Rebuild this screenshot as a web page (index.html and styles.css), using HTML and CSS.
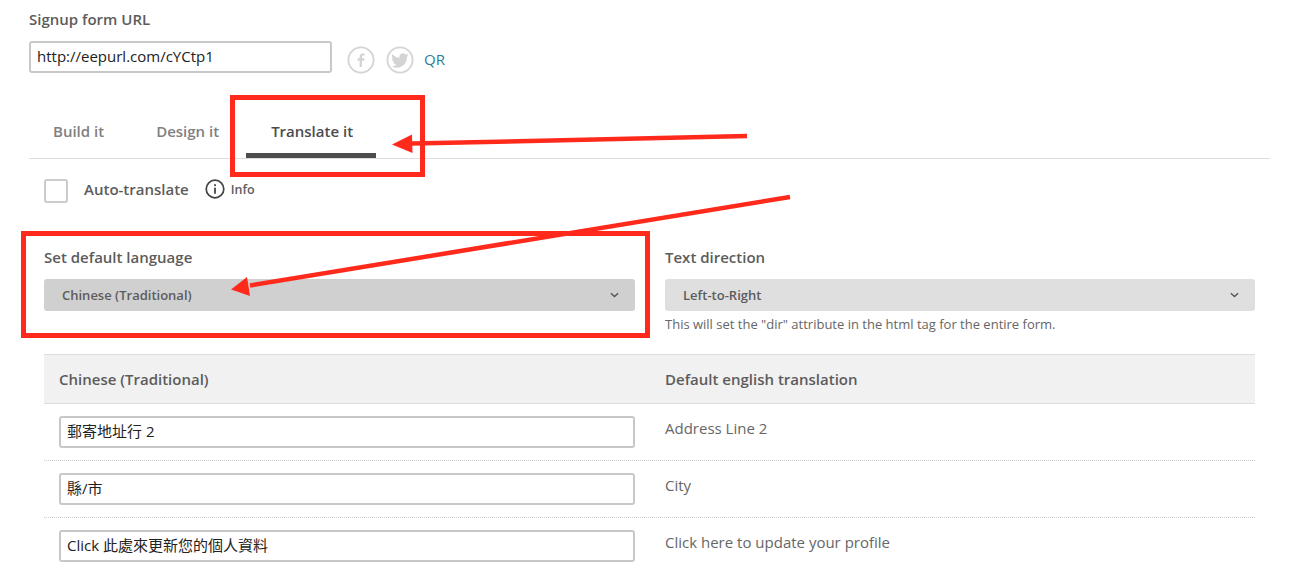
FILE: index.html
```html
<!DOCTYPE html>
<html lang="en">
<head>
<meta charset="utf-8">
<title>Signup form</title>
<link rel="stylesheet" href="styles.css">
</head>
<body>
<main class="page">
  <section class="url-block">
    <div class="label">Signup form URL</div>
    <div class="url-row">
      <div class="field url-field">http://eepurl.com/cYCtp1</div>
      <svg class="social" viewBox="0 0 28 28" width="28" height="28"><circle cx="14" cy="14" r="12.6" fill="none" stroke="#d4d4d4" stroke-width="1.8"/><path d="M15 21v-6.3h2.2l.4-2.4H15v-1.5c0-.8.3-1.2 1.2-1.2h1.4V7.5c-.4 0-1.100-.1-1.900-.1-1.900 0-3.100 1.100-3.100 3.200v1.700h-2.100v2.400h2.100V21z" fill="#d4d4d4"/></svg>
      <svg class="social" viewBox="0 0 28 28" width="28" height="28"><circle cx="14" cy="14" r="12.6" fill="none" stroke="#d4d4d4" stroke-width="1.8"/><path d="M22.500 9c-.7.300-1.300.5-2.100.6.800-.5 1.300-1.200 1.600-2-.7.400-1.500.7-2.300.9a3.600 3.600 0 0 0-6.200 3.300C10.600 11.600 8 10.200 6.300 8c-1 1.600-.5 3.700 1.100 4.800-.6 0-1.100-.2-1.600-.4 0 1.700 1.200 3.200 2.900 3.600-.5.100-1.100.2-1.600.1.500 1.400 1.800 2.400 3.400 2.500A7.200 7.200 0 0 1 5.200 20.100 10.200 10.200 0 0 0 20.900 11c.6-.5 1.200-1.200 1.600-2z" fill="#d4d4d4"/></svg>
      <a class="qr">QR</a>
    </div>
  </section>

  <nav class="tabs">
    <span class="tab tab-build">Build it</span>
    <span class="tab tab-design">Design it</span>
    <span class="tab tab-active">Translate it</span>
  </nav>

  <section class="auto-row">
    <span class="checkbox"></span>
    <span class="auto-label">Auto-translate</span>
    <svg class="info-icon" viewBox="0 0 20 20" width="20" height="20"><circle cx="10" cy="10" r="8.800" fill="none" stroke="#444" stroke-width="1.700"/><rect x="9.100" y="8.700" width="1.800" height="6" fill="#444"/><rect x="9.100" y="5.200" width="1.800" height="1.900" fill="#444"/></svg>
    <span class="info-text">Info</span>
  </section>

  <section class="settings">
    <div class="setting">
      <div class="label">Set default language</div>
      <div class="select select-focus"><span>Chinese (Traditional)</span><svg class="chev" viewBox="0 0 10 6" width="9" height="6"><path d="M1 1l4 3.600L9 1" fill="none" stroke="#555" stroke-width="1.600"/></svg></div>
    </div>
    <div class="setting">
      <div class="label">Text direction</div>
      <div class="select"><span>Left-to-Right</span><svg class="chev" viewBox="0 0 10 6" width="9" height="6"><path d="M1 1l4 3.600L9 1" fill="none" stroke="#555" stroke-width="1.600"/></svg></div>
      <p class="hint">This will set the "dir" attribute in the html tag for the entire form.</p>
    </div>
  </section>

  <section class="table">
    <div class="thead">
      <div class="th">Chinese (Traditional)</div>
      <div class="th">Default english translation</div>
    </div>
    <div class="tr">
      <div class="td"><div class="field">郵寄地址行 2</div></div>
      <div class="td-text">Address Line 2</div>
    </div>
    <div class="tr">
      <div class="td"><div class="field">縣/市</div></div>
      <div class="td-text">City</div>
    </div>
    <div class="tr">
      <div class="td"><div class="field">Click 此處來更新您的個人資料</div></div>
      <div class="td-text">Click here to update your profile</div>
    </div>
  </section>
</main>

<svg class="annotations" viewBox="0 0 1305 570" width="1305" height="570">
  <rect class="note-box" x="232.500" y="97.500" width="190" height="77"/>
  <rect class="note-box" x="23.500" y="233.500" width="624" height="102"/>
  <path class="note-line" d="M747 136L412 143.600"/>
  <path class="note-head" d="M392 144.500L412 134.500L412.500 153z"/>
  <path class="note-line" d="M790 197L250 285.500"/>
  <path class="note-head" d="M231 289.500L247 277L250 296z"/>
</svg>
</body>
</html>
```
FILE: styles.css
```css
* { box-sizing: border-box; }
html, body { margin: 0; padding: 0; background: #fff; }
body {
  width: 1305px;
  height: 570px;
  overflow: hidden;
  position: relative;
  font-family: "Open Sans", "Noto Sans CJK TC", sans-serif;
  color: #555;
}
.page {
  width: 1241px;
  margin-left: 29px;
  padding-top: 10px;
}
.label {
  font-size: 15px;
  line-height: 19px;
  font-weight: 600;
  color: #5c5c5c;
}
.url-row {
  display: flex;
  align-items: center;
  margin-top: 12px;
  height: 32px;
}
.field {
  height: 32px;
  border: 2px solid #c8c8c8;
  border-radius: 3px;
  padding-left: 6px;
  font-size: 15px;
  line-height: 27px;
  color: #222;
  background: #fff;
  white-space: nowrap;
}
.url-field { width: 303px; }
.social { margin-top: 5px; flex: none; }
.url-field + .social { margin-left: 15px; }
.social + .social { margin-left: 11px; }
.qr {
  margin-left: 10px;
  margin-top: 5px;
  font-size: 15px;
  line-height: 19px;
  color: #2a7f96;
}
.tabs {
  position: relative;
  display: flex;
  height: 86px;
  padding-top: 49px;
  border-bottom: 1px solid #ddd;
  width: 1241px;
}
.tab {
  font-size: 15px;
  line-height: 19px;
  font-weight: 600;
  color: #808080;
  white-space: nowrap;
}
.tab-build { margin-left: 24px; }
.tab-design { margin-left: 52px; }
.tab-active { margin-left: 52px; color: #4c4c4c; position: relative; }
.tab-active::after {
  content: "";
  position: absolute;
  left: -25px;
  width: 130px;
  top: 31px;
  height: 5px;
  background: #4d4d4d;
}
.auto-row {
  display: flex;
  align-items: center;
  height: 24px;
  margin-top: 20px;
  margin-left: 15px;
}
.checkbox {
  width: 24px;
  height: 24px;
  border: 2px solid #ccc;
  border-radius: 3px;
  flex: none;
}
.auto-label {
  margin-left: 16px;
  font-size: 15px;
  line-height: 22px;
  margin-bottom: 4px;
  font-weight: 600;
  color: #5c5c5c;
}
.info-icon { margin-left: 16px; flex: none; margin-bottom: 4px; }
.info-text {
  margin-left: 6px;
  font-size: 12.500px;
  margin-bottom: 4px;
  font-weight: 600;
  color: #5c5c5c;
}
.settings {
  display: grid;
  grid-template-columns: 591px 590px;
  column-gap: 30px;
  margin-left: 15px;
  margin-top: 46px;
  height: 96px;
}
.setting .label { line-height: 17px; }
.select {
  display: flex;
  align-items: center;
  justify-content: space-between;
  height: 32px;
  margin-top: 13px;
  padding: 0 16px 0 18px;
  background: #dfdfdf;
  border-radius: 3px;
  font-size: 13px;
  font-weight: 600;
  color: #5c5c5c;
}
.select-focus { background: #d0d0d0; }
.hint {
  margin: 5px 0 0;
  font-size: 13px;
  line-height: 16px;
  color: #666;
}
.table {
  margin-left: 15px;
  width: 1211px;
  margin-top: 9px;
}
.thead {
  display: grid;
  grid-template-columns: 621px 590px;
  height: 50px;
  background: #f1f1f1;
  border-top: 1px solid #ddd;
  border-bottom: 1px solid #ddd;
  align-items: center;
}
.th {
  font-size: 15px;
  font-weight: 600;
  color: #5c5c5c;
  padding-left: 15px;
}
.th + .th { padding-left: 0; }
.tr {
  display: grid;
  grid-template-columns: 621px 590px;
  height: 57px;
  border-bottom: 1px dotted #ccc;
  padding-top: 12px;
}
.tr:last-child { border-bottom: 0; }
.td { padding-left: 15px; padding-right: 30px; }
.td-text {
  font-size: 15px;
  line-height: 19px;
  color: #666;
  padding-top: 3px;
}
.annotations {
  position: absolute;
  left: 0;
  top: 0;
  pointer-events: none;
}
.note-box { fill: none; stroke: #ff2a1c; stroke-width: 5; }
.note-line { fill: none; stroke: #ff2a1c; stroke-width: 4.500; }
.note-head { fill: #ff2a1c; }
```
